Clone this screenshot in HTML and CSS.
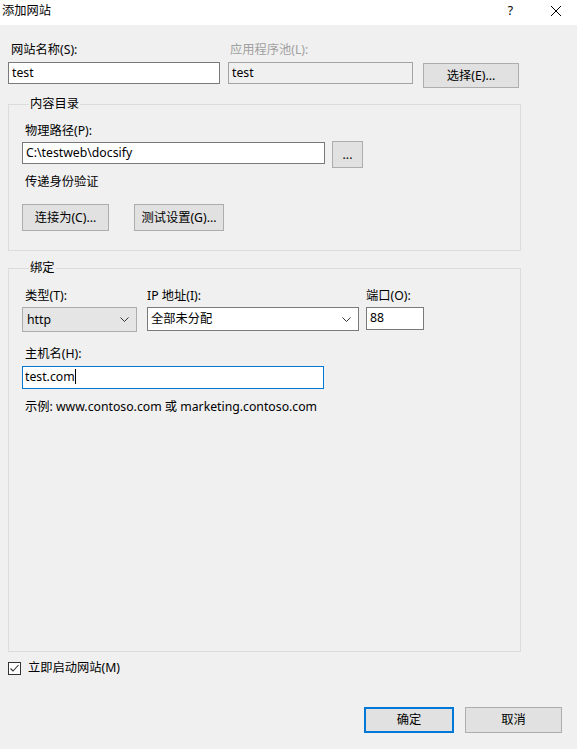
FILE: index.html
```html
<!DOCTYPE html>
<html lang="zh-CN">
<head>
<meta charset="utf-8">
<title>添加网站</title>
<link rel="stylesheet" href="styles.css">
</head>
<body>
<div class="window">
  <div class="titlebar">
    <span class="title">添加网站</span>
    <span class="tb-btns">
      <span class="tb-help">?</span>
      <svg class="tb-close" width="12" height="12" viewBox="0 0 12 12"><path d="M1 1 L11 11 M11 1 L1 11" stroke="#000" stroke-width="1" fill="none"/></svg>
    </span>
  </div>
  <div class="body">
    <div class="row-top">
      <div class="col col-name">
        <label class="lbl">网站名称(S):</label>
        <div class="input">test</div>
      </div>
      <div class="col col-pool">
        <label class="lbl disabled">应用程序池(L):</label>
        <div class="input readonly">test</div>
      </div>
      <div class="col col-sel">
        <div class="btn btn-select">选择(E)...</div>
      </div>
    </div>

    <fieldset class="group group-content">
      <legend>内容目录</legend>
      <label class="lbl">物理路径(P):</label>
      <div class="path-row">
        <div class="input input-path">C:\testweb\docsify</div>
        <div class="btn btn-dots">...</div>
      </div>
      <div class="lbl lbl-auth">传递身份验证</div>
      <div class="auth-row">
        <div class="btn btn-connect">连接为(C)...</div>
        <div class="btn btn-test">测试设置(G)...</div>
      </div>
    </fieldset>

    <fieldset class="group group-bind">
      <legend>绑定</legend>
      <div class="bind-row">
        <div class="bcol bcol-type">
          <label class="lbl">类型(T):</label>
          <div class="select select-type"><span>http</span><svg width="9" height="5" viewBox="0 0 9 5"><path d="M0.5 0.5 L4.5 4.5 L8.5 0.5" stroke="#333" fill="none"/></svg></div>
        </div>
        <div class="bcol bcol-ip">
          <label class="lbl lbl-ip">IP 地址(I):</label>
          <div class="select select-ip"><span>全部未分配</span><svg width="9" height="5" viewBox="0 0 9 5"><path d="M0.5 0.5 L4.5 4.5 L8.5 0.5" stroke="#333" fill="none"/></svg></div>
        </div>
        <div class="bcol bcol-port">
          <label class="lbl lbl-port">端口(O):</label>
          <div class="input input-port">88</div>
        </div>
      </div>
      <label class="lbl lbl-host">主机名(H):</label>
      <div class="input input-host focused">test.com<span class="caret"></span></div>
      <div class="lbl lbl-example">示例: www.contoso.com 或 marketing.contoso.com</div>
    </fieldset>

    <div class="check-row">
      <span class="checkbox"><svg width="11" height="11" viewBox="0 0 11 11"><path d="M1.5 5.5 L4 8 L9.5 2" stroke="#333" stroke-width="1.1" fill="none"/></svg></span>
      <span class="check-label">立即启动网站(M)</span>
    </div>

    <div class="footer">
      <div class="btn btn-ok">确定</div>
      <div class="btn btn-cancel">取消</div>
    </div>
  </div>
</div>
</body>
</html>
```

FILE: styles.css
```css
* { box-sizing: border-box; }
html, body {
  margin: 0;
  padding: 0;
}
body {
  width: 577px;
  height: 749px;
  overflow: hidden;
  font-family: "Segoe UI", "Noto Sans", "Noto Sans CJK SC", sans-serif;
  font-size: 12.25px;
  line-height: 16px;
  color: #000;
  background: #f0f0f0;
}
.window {
  width: 577px;
  height: 749px;
  display: flex;
  flex-direction: column;
}
.titlebar {
  height: 25px;
  background: #fff;
  display: flex;
  align-items: center;
  justify-content: space-between;
  flex-shrink: 0;
}
.title {
  padding-left: 2px;
  margin-top: -4px;
}
.tb-btns {
  display: flex;
  align-items: center;
  margin-top: -4px;
}
.tb-help {
  margin-right: 37px;
}
.tb-close {
  margin-right: 15px;
}
.body {
  flex: 1;
  display: flex;
  flex-direction: column;
  padding: 17px 8px 16px 8px;
}
.lbl {
  display: block;
  height: 16px;
  white-space: nowrap;
}
.disabled { color: #a0a0a0; }
.row-top {
  display: flex;
  align-items: flex-start;
}
.col-name { width: 212px; }
.col-name .lbl { padding-left: 3px; }
.col-pool { width: 185px; margin-left: 8px; }
.col-pool .lbl { padding-left: 2px; }
.col-sel { margin-left: 10px; padding-top: 21px; }
.input {
  height: 22px;
  background: #fff;
  border: 1px solid #7a7a7a;
  padding: 2px 3px;
  line-height: 16px;
  white-space: nowrap;
  margin-top: 4px;
}
.input.readonly {
  background: #f0f0f0;
  border-color: #a3a3a3;
}
.btn {
  background: #e1e1e1;
  border: 1px solid #adadad;
  display: flex;
  align-items: center;
  justify-content: center;
  white-space: nowrap;
  height: 27px;
}
.btn-select { width: 96px; height: 25px; }

.group {
  margin: 0;
  border: 1px solid #dcdcdc;
  min-width: 0;
}
.group legend {
  padding: 0 1px;
  margin-left: 7px;
  line-height: 16px;
}
.group-content {
  margin-top: 8px;
  width: 513px;
  padding: 11px 10px 19px 13px;
}
.group-content .lbl { padding-left: 3px; }
.path-row {
  display: flex;
  align-items: flex-start;
  margin-top: 2px;
}
.input-path { width: 303px; margin-top: 1px; }
.btn-dots { width: 31px; margin-left: 7px; }
.lbl-auth { margin-top: 6px; }
.auth-row {
  display: flex;
  margin-top: 14px;
}
.btn-connect { width: 87px; }
.btn-test { width: 90px; margin-left: 25px; }

.group-bind {
  margin-top: 9px;
  width: 513px;
  flex: 1;
  padding: 12px 10px 0 13px;
}
.bind-row { display: flex; }
.bcol-type { width: 115px; }
.bcol-type .lbl { padding-left: 3px; }
.bcol-ip { width: 212px; margin-left: 10px; }
.bcol-port { width: 58px; margin-left: 7px; }
.select {
  margin-top: 3px;
  height: 25px;
  display: flex;
  align-items: center;
  justify-content: space-between;
  padding: 0 7px 0 4px;
  border: 1px solid #adadad;
  background: #e5e5e5;
}
.select-ip {
  height: 24px;
  background: #fff;
  border-color: #7a7a7a;
  padding-left: 3px;
}
.input-port { margin-top: 3px; height: 23px; }
.lbl-host { margin-top: 14px; padding-left: 3px; }
.input-host {
  width: 302px;
  height: 23px;
  margin-top: 4px;
  padding-left: 2px;
}
.focused { border-color: #0078d7; }
.caret {
  display: inline-block;
  width: 1px;
  height: 15px;
  background: #000;
  vertical-align: -3px;
}
.lbl-example { margin-top: 10px; padding-left: 3px; }

.check-row {
  display: flex;
  align-items: center;
  height: 16px;
  margin-top: 8px;
}
.checkbox {
  width: 13px;
  height: 13px;
  border: 1px solid #333;
  background: #fff;
  display: flex;
  align-items: center;
  justify-content: center;
}
.check-label { margin-left: 7px; }
.footer {
  display: flex;
  justify-content: flex-end;
  margin-top: 31px;
  padding-right: 7px;
}
.btn-ok {
  width: 90px;
  height: 26px;
  border: 2px solid #0078d7;
}
.btn-cancel {
  width: 97px;
  height: 26px;
  margin-left: 11px;
}
```
